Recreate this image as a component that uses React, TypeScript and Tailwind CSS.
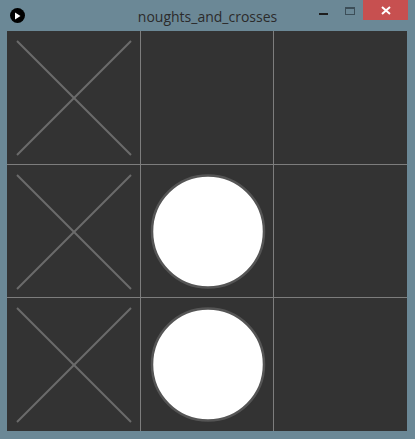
const board: ('x' | 'o' | '')[] = ['x', '', '', 'x', 'o', '', 'x', 'o', ''];

function Cross() {
  return (
    <svg width="133" height="133" className="block">
      <line x1="10" y1="10" x2="124" y2="124" stroke="#6b6b6b" strokeWidth="2" />
      <line x1="124" y1="10" x2="10" y2="124" stroke="#6b6b6b" strokeWidth="2" />
    </svg>
  );
}

function Nought() {
  return (
    <svg width="133" height="133" className="block">
      <circle cx="67" cy="66.5" r="56" fill="#ffffff" stroke="#555555" strokeWidth="2.5" />
    </svg>
  );
}

export default function App() {
  return (
    <div className="w-[415px] h-[439px] bg-[#6b8896] flex flex-col">
      {/* title bar */}
      <div className="h-[31px] grid grid-cols-[1fr_auto_1fr] items-start">
        <div className="pl-[10px] pt-[8px]">
          <div className="w-[15px] h-[15px] rounded-full bg-black flex items-center justify-center">
            <svg width="7" height="8" viewBox="0 0 7 8">
              <path d="M1 0.5 L6.5 4 L1 7.5 Z" fill="#ffffff" />
            </svg>
          </div>
        </div>
        <div
          className="text-[14px] leading-none pt-[10px] text-[#2b2b2b]"
          style={{ fontFamily: '"Open Sans", "Noto Sans", sans-serif' }}
        >
          noughts_and_crosses
        </div>
        <div className="flex justify-end items-start pr-[7px]">
          <div className="mt-[13px] w-[9px] h-[2px] bg-[#1e1e1e]" />
          <div className="ml-[17px] mt-[7px] w-[10px] h-[8px] border border-[#3c4e58] border-t-2" />
          <div className="ml-[8px] w-[45px] h-[20px] bg-[#c75050] flex items-center justify-center">
            <svg width="10" height="9" viewBox="0 0 10 9">
              <path d="M1 1 L9 8 M9 1 L1 8" stroke="#ffffff" strokeWidth="2" />
            </svg>
          </div>
        </div>
      </div>
      {/* sketch canvas */}
      <div className="ml-[7px] w-[400px] h-[400px] bg-[#333333] grid grid-cols-[133px_133px_134px] grid-rows-[133px_133px_134px]">
        {board.map((v, i) => (
          <div
            key={i}
            className={
              (i % 3 !== 0 ? 'border-l border-[#7d7d7d] ' : '') +
              (i >= 3 ? 'border-t border-[#7d7d7d] ' : '') +
              'overflow-hidden'
            }
          >
            {v === 'x' && <Cross />}
            {v === 'o' && <Nought />}
          </div>
        ))}
      </div>
    </div>
  );
}
